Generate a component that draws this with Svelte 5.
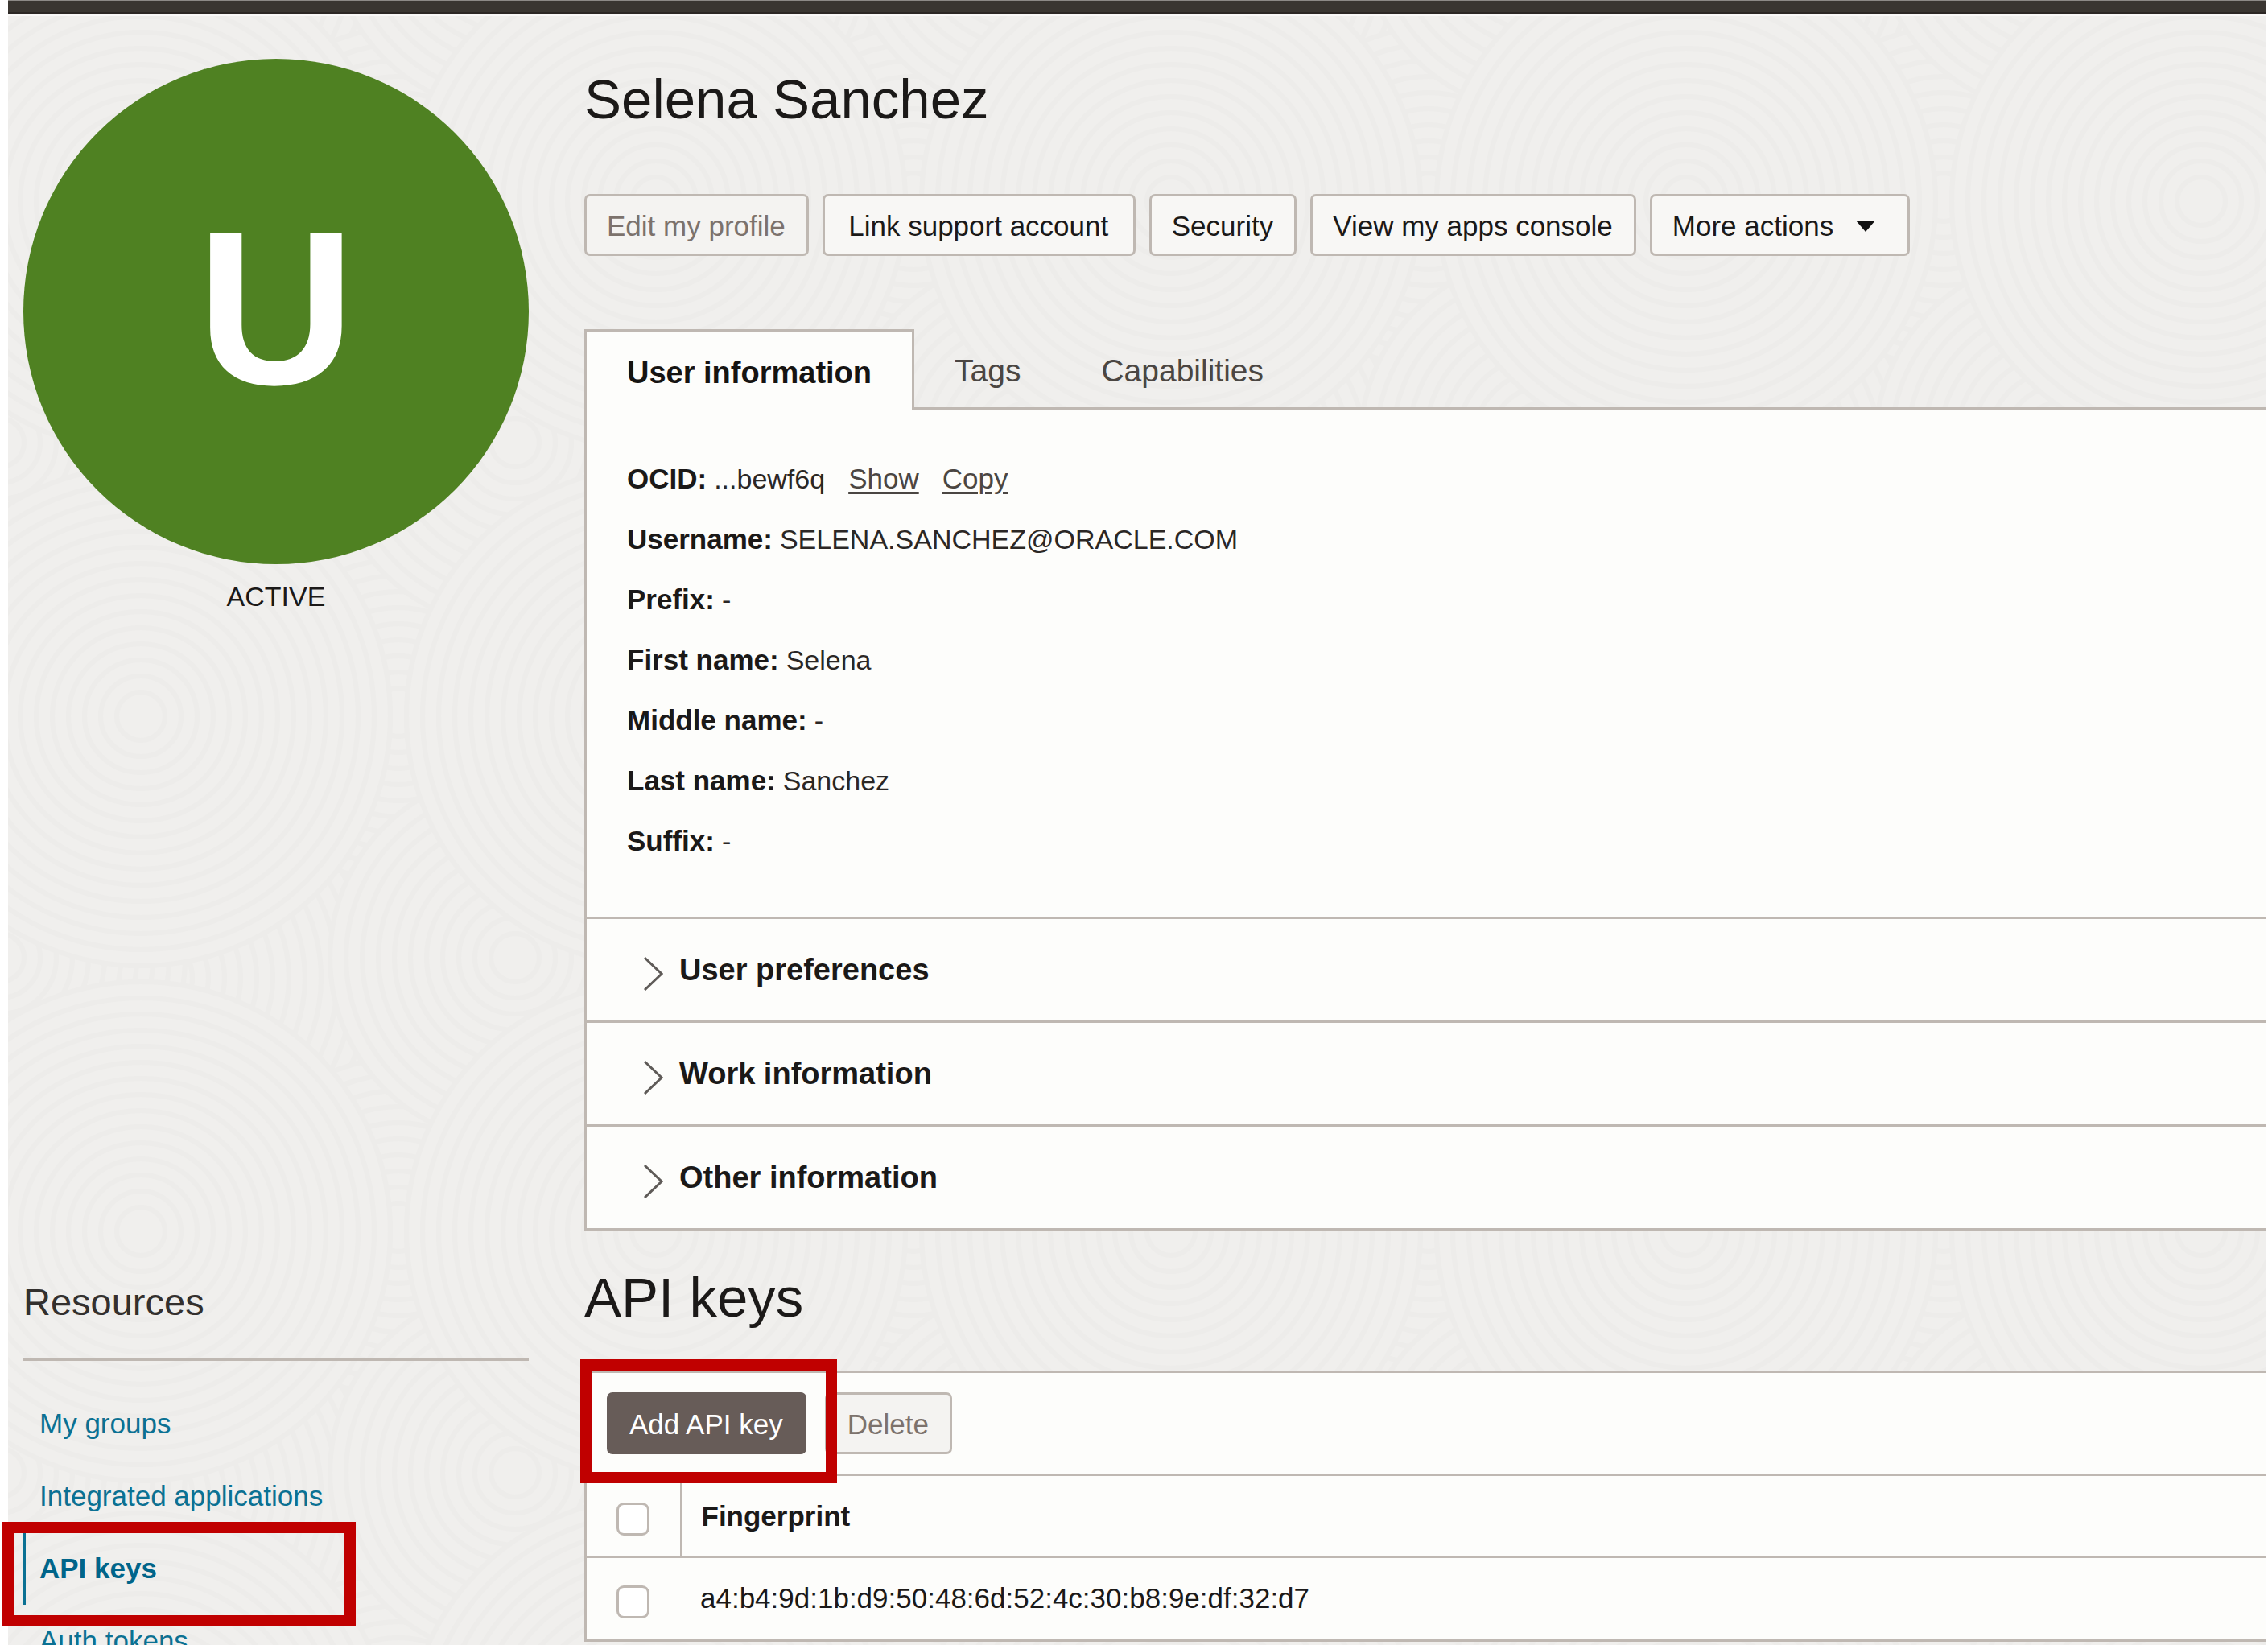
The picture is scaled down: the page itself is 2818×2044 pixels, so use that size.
<script>
  const details = [
    { label: 'OCID', value: '...bewf6q', links: ['Show', 'Copy'] },
    { label: 'Username', value: 'SELENA.SANCHEZ@ORACLE.COM' },
    { label: 'Prefix', value: '-' },
    { label: 'First name', value: 'Selena' },
    { label: 'Middle name', value: '-' },
    { label: 'Last name', value: 'Sanchez' },
    { label: 'Suffix', value: '-' }
  ];
  const sections = ['User preferences', 'Work information', 'Other information'];
  const tabs = ['User information', 'Tags', 'Capabilities'];
  const resources = ['My groups', 'Integrated applications', 'API keys', 'Auth tokens'];
  const fingerprints = ['a4:b4:9d:1b:d9:50:48:6d:52:4c:30:b8:9e:df:32:d7'];

  let activeTab = $state('User information');
  let openSection = $state('');

  // Rings of the tiled background, later discs cover earlier ones.
  const tile = 640;
  const discs = [
    { x: 330, y: 40, r: 340 },
    { x: 485, y: 370, r: 340 },
    { x: 179, y: 575, r: 310 },
    { x: 485, y: 245, r: 210 },
    { x: 630, y: 550, r: 230 },
    { x: 165, y: 250, r: 310 }
  ];
  const shifts = [-tile, 0, tile];
  const rings = discs.flatMap((d) =>
    shifts.flatMap((dy) => shifts.map((dx) => ({ x: d.x + dx, y: d.y + dy, r: d.r })))
  );
  const radii = (r) => Array.from({ length: Math.floor(r / 20) }, (_, i) => r - i * 20);
</script>

<div class="page">
  <div class="surface">
    <svg class="texture" aria-hidden="true">
      <defs>
        <pattern id="rings" width={tile} height={tile} patternUnits="userSpaceOnUse">
          {#each rings as d}
            {#each radii(d.r) as r}
              <circle cx={d.x} cy={d.y} {r} />
            {/each}
          {/each}
        </pattern>
      </defs>
      <rect width="100%" height="100%" fill="url(#rings)" />
    </svg>

    <header class="topbar"></header>

    <div class="layout">
      <aside class="identity">
        <div class="avatar">U</div>
        <p class="status">ACTIVE</p>
      </aside>

      <main class="profile">
        <h1>Selena Sanchez</h1>
        <div class="actions">
          <button class="btn" disabled>Edit my profile</button>
          <button class="btn support">Link support account</button>
          <button class="btn">Security</button>
          <button class="btn">View my apps console</button>
          <button class="btn menu" aria-haspopup="menu">
            More actions
            <svg class="caret" viewBox="0 0 24 14" aria-hidden="true"><path d="M0 0H24L12 14Z" /></svg>
          </button>
        </div>

        <div class="tabs" role="tablist">
          {#each tabs as tab}
            <button
              class="tab"
              class:active={tab === activeTab}
              role="tab"
              aria-selected={tab === activeTab}
              onclick={() => (activeTab = tab)}>{tab}</button>
          {/each}
        </div>

        <div class="panel">
          <dl>
            {#each details as d}
              <div class="detail">
                <dt>{d.label}:</dt>
                <dd>{d.value}</dd>
                {#each d.links ?? [] as link}
                  <a href="#{link.toLowerCase()}">{link}</a>
                {/each}
              </div>
            {/each}
          </dl>
          {#each sections as s}
            <button
              class="section"
              aria-expanded={openSection === s}
              onclick={() => (openSection = openSection === s ? '' : s)}>
              <svg class="chevron" viewBox="0 0 25 52" aria-hidden="true"><path d="M2 11L23 31L2 51" /></svg>
              {s}
            </button>
          {/each}
        </div>
      </main>

      <nav class="resources" aria-labelledby="resources-title">
        <h2 id="resources-title">Resources</h2>
        <ul>
          {#each resources as r}
            <li class:current={r === 'API keys'}>
              <a href="#{r.toLowerCase().replace(' ', '-')}">{r}</a>
              {#if r === 'API keys'}<span class="mark nav-mark"></span>{/if}
            </li>
          {/each}
        </ul>
      </nav>

      <section class="keys">
        <h1>API keys</h1>
        <div class="key-panel">
          <div class="toolbar">
            <div class="marked">
              <button class="btn primary">Add API key</button>
              <span class="mark add-mark"></span>
            </div>
            <button class="btn" disabled>Delete</button>
          </div>
          <table>
            <thead>
              <tr>
                <th class="check"><input type="checkbox" aria-label="Select all keys" /></th>
                <th>Fingerprint</th>
              </tr>
            </thead>
            <tbody>
              {#each fingerprints as f}
                <tr>
                  <td class="check"><input type="checkbox" aria-label="Select key {f}" /></td>
                  <td>{f}</td>
                </tr>
              {/each}
            </tbody>
          </table>
        </div>
      </section>
    </div>
  </div>
</div>

<style>
  :global(body) {
    margin: 0;
    background: #fff;
  }
  .page {
    --line: #bfb8b2;
    --ink: #1b1918;
    --paper: #fdfdfb;
    --blue: #0b7193;
    box-sizing: border-box;
    height: 100vh;
    padding: 0 2px 0 10px;
    overflow: hidden;
    font-family: 'Liberation Sans', Arial, sans-serif;
    font-size: 35px;
    color: var(--ink);
  }
  .page * {
    box-sizing: border-box;
  }
  .surface {
    position: relative;
    min-height: 100%;
    background: #f0efed;
  }
  .texture {
    position: absolute;
    inset: 0;
    width: 100%;
    height: 100%;
  }
  .texture circle {
    fill: #f0efed;
    stroke: #edecea;
    stroke-width: 6;
  }
  .topbar {
    position: relative;
    height: 17px;
    background: #3a3631;
    border-top: 1px solid #8d8a86;
    border-bottom: 2px solid #2c2724;
    box-shadow: 0 3px #f9f8f7;
  }
  .layout {
    position: relative;
    display: grid;
    grid-template-columns: 628px minmax(0, 1fr);
    column-gap: 69px;
    padding-left: 19px;
  }
  .identity {
    padding-top: 56px;
  }
  .avatar {
    display: grid;
    place-items: center;
    aspect-ratio: 1;
    padding-bottom: 8px;
    border-radius: 50%;
    background: #4f8122;
    color: #fff;
    font-size: 272px;
    font-weight: 700;
    line-height: 1;
  }
  .status {
    margin: 20px 0 0;
    font-size: 34px;
    line-height: 40px;
    text-align: center;
  }
  h1 {
    margin: 0;
    font-size: 69px;
    font-weight: 400;
    line-height: 80px;
  }
  .profile {
    padding-top: 67px;
  }
  .actions {
    display: flex;
    gap: 17px;
    margin-top: 77px;
  }
  button {
    font: inherit;
    color: inherit;
    cursor: pointer;
  }
  .btn {
    height: 77px;
    padding: 2px 26px 0 25px;
    border: 3px solid var(--line);
    border-radius: 7px;
    background: #f8f7f5;
    white-space: nowrap;
  }
  .btn:disabled {
    background: #f4f3f1;
    color: #7c726c;
  }
  .support {
    min-width: 389px;
  }
  .menu {
    display: flex;
    align-items: center;
    gap: 28px;
    padding-right: 40px;
  }
  .caret {
    width: 24px;
    height: 14px;
    fill: #111;
  }
  .tabs {
    position: relative;
    display: flex;
    height: 100px;
    margin-top: 91px;
  }
  .tab {
    padding: 3px 50px 0;
    border: 0;
    background: none;
    font-size: 39px;
    color: #4b4642;
  }
  .active {
    padding-top: 6px;
    border: 3px solid var(--line);
    border-bottom: 0;
    background: var(--paper);
    font-size: 38px;
    font-weight: 700;
    color: #161412;
  }
  .panel {
    margin-top: -3px;
    border: 3px solid var(--line);
    border-right: 0;
    background: var(--paper);
  }
  dl {
    margin: 0;
    padding: 48px 50px 57px;
  }
  .detail {
    display: flex;
    align-items: baseline;
    height: 75px;
    line-height: 75px;
  }
  dt {
    margin-right: 9px;
    font-weight: 700;
  }
  dd {
    margin: 0;
    font-size: 34px;
    color: #2b2725;
  }
  .detail a {
    margin-left: 29px;
    color: #4b4642;
    text-decoration-thickness: 3px;
    text-underline-offset: 4px;
  }
  .section {
    display: flex;
    align-items: center;
    gap: 20px;
    width: 100%;
    height: 129px;
    padding: 0 70px;
    border: 0;
    border-top: 3px solid var(--line);
    background: none;
    font-size: 38px;
    font-weight: 700;
    text-align: left;
  }
  .chevron {
    width: 25px;
    height: 52px;
    fill: none;
    stroke: #5f5b58;
    stroke-width: 3;
  }
  .resources {
    padding-top: 61px;
  }
  h2 {
    margin: 0;
    padding-bottom: 42px;
    border-bottom: 3px solid var(--line);
    font-size: 47px;
    font-weight: 400;
    line-height: 56px;
    color: #33302e;
  }
  ul {
    margin: 0;
    padding: 33px 0 0;
    list-style: none;
  }
  li {
    position: relative;
    padding-left: 20px;
    line-height: 90px;
  }
  li a {
    color: var(--blue);
    text-decoration: none;
  }
  .current {
    padding-left: 17px;
    border-left: 3px solid var(--blue);
  }
  .current a {
    color: #00658a;
    font-weight: 700;
  }
  .mark {
    position: absolute;
    z-index: 1;
    border: 14px solid #c00000;
    pointer-events: none;
  }
  .nav-mark {
    top: -13px;
    bottom: -27px;
    left: -29px;
    width: 439px;
  }
  .keys {
    padding-top: 44px;
  }
  .key-panel {
    margin-top: 50px;
    border: 3px solid var(--line);
    border-right: 0;
    background: var(--paper);
  }
  .toolbar {
    display: flex;
    gap: 23px;
    padding: 24px 25px;
  }
  .marked {
    position: relative;
  }
  .add-mark {
    inset: -41px -38px -36px -33px;
  }
  .primary {
    border-color: #675c58;
    background: #675c58;
    color: #fff;
  }
  table {
    width: 100%;
    border-collapse: collapse;
  }
  th,
  td {
    height: 102px;
    padding: 0 24px;
    border-top: 3px solid var(--line);
    text-align: left;
  }
  .check {
    width: 117px;
    padding: 8px 0 0 37px;
  }
  th.check {
    border-right: 3px solid var(--line);
  }
  input {
    appearance: none;
    display: block;
    width: 41px;
    height: 41px;
    margin: 0;
    border: 3px solid var(--line);
    border-radius: 9px;
    background: #fff;
  }
  input:checked {
    background: #675c58;
  }
</style>
